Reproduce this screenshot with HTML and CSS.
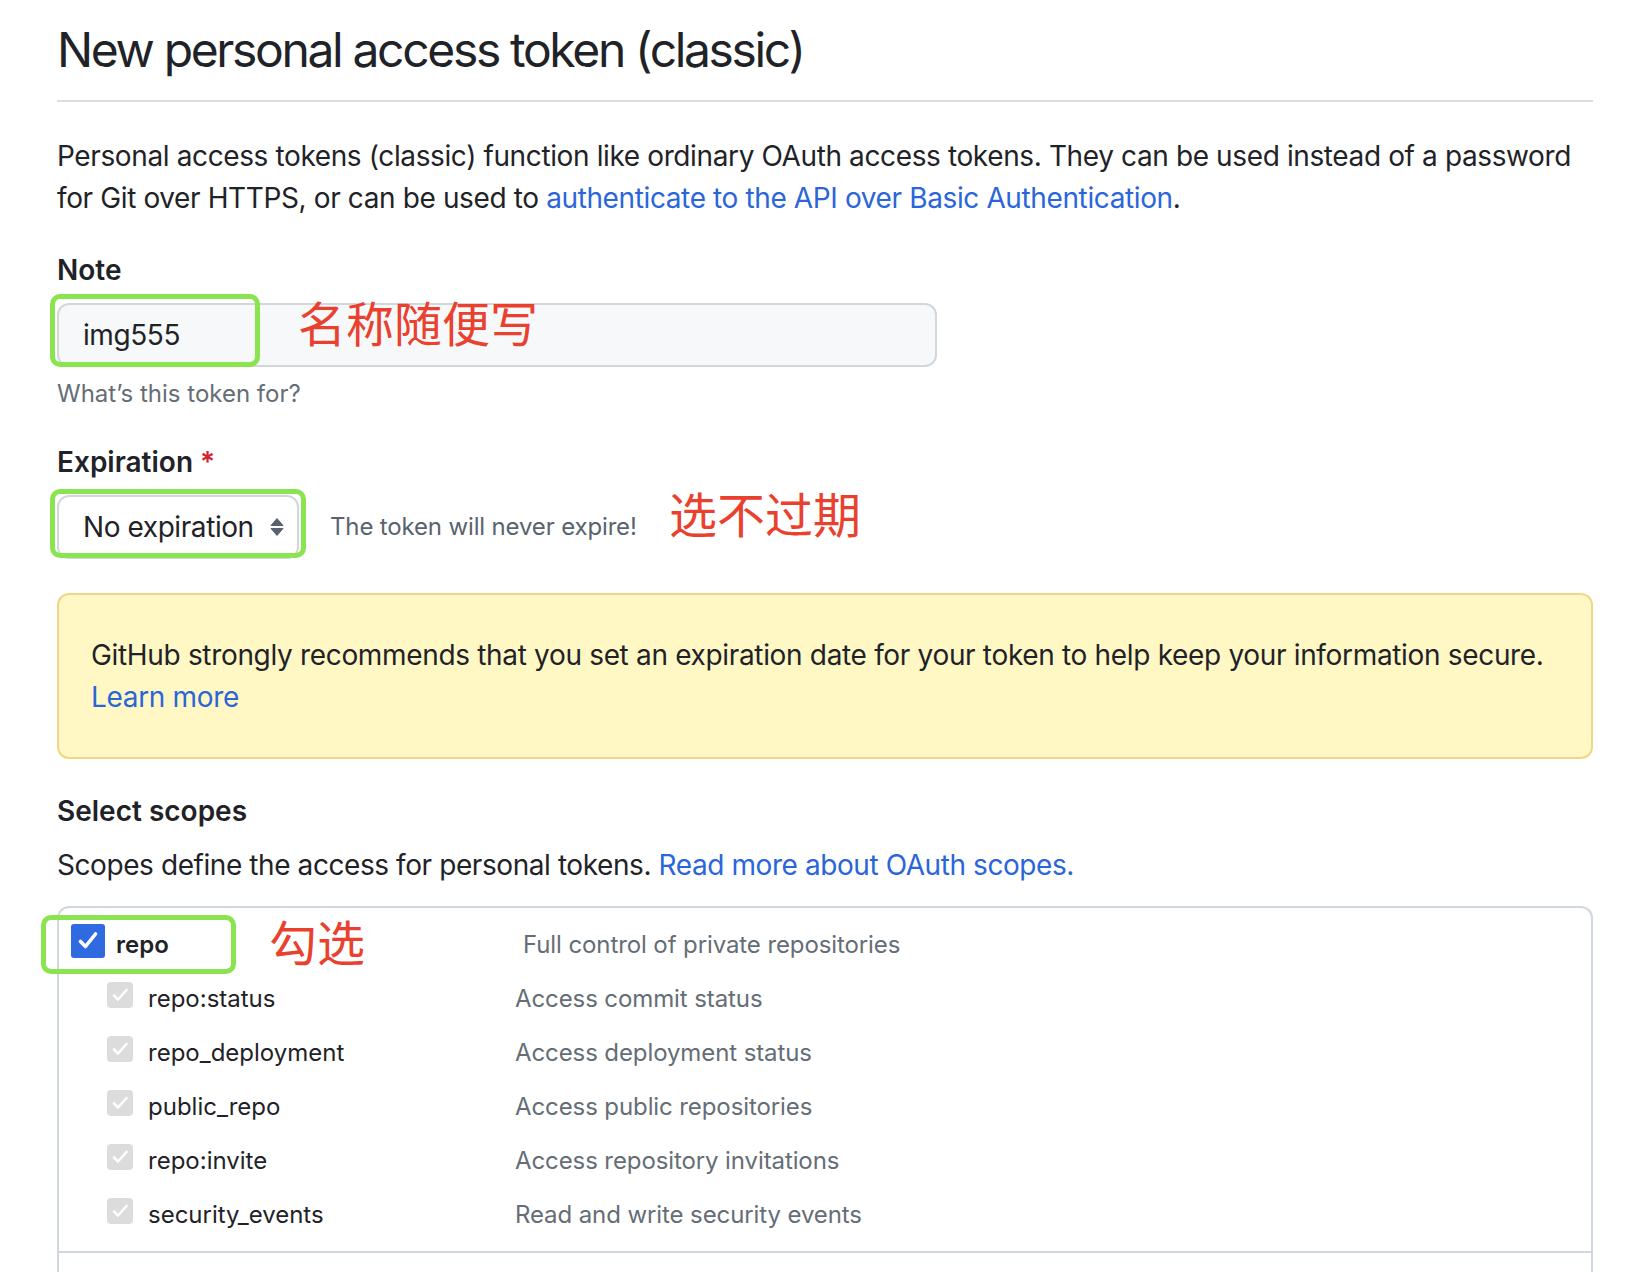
FILE: index.html
```html
<!DOCTYPE html>
<html lang="en">
<head>
<meta charset="utf-8">
<title>New personal access token (classic)</title>
<link rel="stylesheet" href="styles.css">
</head>
<body>
<main class="page">
  <h1 class="subhead">New personal access token (classic)</h1>

  <p class="intro">Personal access tokens (classic) function like ordinary OAuth access tokens. They can be used instead of a password for Git over HTTPS, or can be used to <a href="#">authenticate to the API over Basic Authentication</a>.</p>

  <div class="form-group">
    <label class="label">Note</label>
    <div class="input-wrap">
      <div class="input">img555</div>
      <span class="hl hl-note"></span>
      <span class="anno anno-note">名称随便写</span>
    </div>
    <p class="note">What’s this token for?</p>
  </div>

  <div class="form-group form-group-exp">
    <label class="label">Expiration <span class="req">*</span></label>
    <div class="expire-row">
      <div class="select-wrap">
        <div class="select">No expiration
          <svg class="select-arrows" width="16" height="20" viewBox="0 0 16 20"><path d="M8 1.5 L14 8.5 H2 Z M2 11.5 H14 L8 18.5 Z" fill="#59636e" stroke="#59636e" stroke-width="1" stroke-linejoin="round"/></svg>
        </div>
        <span class="hl hl-select"></span>
      </div>
      <span class="expire-note">The token will never expire!</span>
      <span class="anno anno-expire">选不过期</span>
    </div>
  </div>

  <div class="flash">GitHub strongly recommends that you set an expiration date for your token to help keep your information secure. <a href="#">Learn more</a></div>

  <h2 class="label scopes-title">Select scopes</h2>
  <p class="scopes-desc">Scopes define the access for personal tokens. <a href="#">Read more about OAuth scopes.</a></p>

  <div class="scopes">
    <div class="scope-list">
      <div class="scope-row scope-parent">
        <div class="scope-name">
          <span class="cb cb-on"><svg width="34" height="34" viewBox="0 0 34 34"><path d="M9.5 17.5 L14.5 22.5 L24.5 10" fill="none" stroke="#fff" stroke-width="3.6" stroke-linecap="round" stroke-linejoin="round"/></svg></span>
          <span class="scope-label strong">repo</span>
        </div>
        <div class="scope-desc">Full control of private repositories</div>
        <span class="hl hl-repo"></span>
        <span class="anno anno-repo">勾选</span>
      </div>
      <div class="scope-row">
        <div class="scope-name sub">
          <span class="cb cb-dis"><svg width="26" height="26" viewBox="0 0 26 26"><path d="M7 13.5 L11 17.5 L19.5 8" fill="none" stroke="#fff" stroke-width="2.6" stroke-linecap="round" stroke-linejoin="round"/></svg></span>
          <span class="scope-label">repo:status</span>
        </div>
        <div class="scope-desc">Access commit status</div>
      </div>
      <div class="scope-row">
        <div class="scope-name sub">
          <span class="cb cb-dis"><svg width="26" height="26" viewBox="0 0 26 26"><path d="M7 13.5 L11 17.5 L19.5 8" fill="none" stroke="#fff" stroke-width="2.6" stroke-linecap="round" stroke-linejoin="round"/></svg></span>
          <span class="scope-label">repo_deployment</span>
        </div>
        <div class="scope-desc">Access deployment status</div>
      </div>
      <div class="scope-row">
        <div class="scope-name sub">
          <span class="cb cb-dis"><svg width="26" height="26" viewBox="0 0 26 26"><path d="M7 13.5 L11 17.5 L19.5 8" fill="none" stroke="#fff" stroke-width="2.6" stroke-linecap="round" stroke-linejoin="round"/></svg></span>
          <span class="scope-label">public_repo</span>
        </div>
        <div class="scope-desc">Access public repositories</div>
      </div>
      <div class="scope-row">
        <div class="scope-name sub">
          <span class="cb cb-dis"><svg width="26" height="26" viewBox="0 0 26 26"><path d="M7 13.5 L11 17.5 L19.5 8" fill="none" stroke="#fff" stroke-width="2.6" stroke-linecap="round" stroke-linejoin="round"/></svg></span>
          <span class="scope-label">repo:invite</span>
        </div>
        <div class="scope-desc">Access repository invitations</div>
      </div>
      <div class="scope-row">
        <div class="scope-name sub">
          <span class="cb cb-dis"><svg width="26" height="26" viewBox="0 0 26 26"><path d="M7 13.5 L11 17.5 L19.5 8" fill="none" stroke="#fff" stroke-width="2.6" stroke-linecap="round" stroke-linejoin="round"/></svg></span>
          <span class="scope-label">security_events</span>
        </div>
        <div class="scope-desc">Read and write security events</div>
      </div>
    </div>
    <div class="scope-more"></div>
  </div>
</main>
</body>
</html>
```

FILE: styles.css
```css
* { box-sizing: border-box; }
html, body { margin: 0; background: #ffffff; }
body {
  font-family: Inter, "Noto Sans", sans-serif;
  color: #1f2328;
}
a { color: #2a66d9; text-decoration: none; }

.page {
  width: 1536px;
  margin-left: 57px;
}

.subhead {
  margin: 0;
  padding: 20px 0 20px;
  font-size: 48px;
  line-height: 60px;
  font-weight: 400;
  letter-spacing: -2.35px;
  border-bottom: 2px solid #d8dee4;
}

.intro {
  margin: 33px 0 0;
  font-size: 28px;
  line-height: 42px;
  letter-spacing: -0.38px;
}

.form-group { margin-top: 30px; }
.form-group-exp { margin-top: 29px; }

.label {
  display: block;
  margin: 0 0 12px;
  font-size: 28px;
  line-height: 42px;
  font-weight: 600;
}
.req { color: #d1242f; }

.input-wrap { position: relative; width: 880px; }
.input {
  height: 64px;
  padding: 0 24px;
  display: flex;
  align-items: center;
  font-size: 28px;
  letter-spacing: -0.42px;
  background: #f6f8fa;
  border: 2px solid #d0d7de;
  border-radius: 12px;
}

.note {
  margin: 9px 0 0;
  font-size: 24px;
  line-height: 36px;
  color: #656d76;
}

.hl {
  position: absolute;
  border: 5px solid #8ae44f;
  border-radius: 10px;
  pointer-events: none;
}
.hl-note { left: -7px; top: -9px; width: 210px; height: 73px; }
.hl-select { left: -7px; top: -6px; width: 256px; height: 69px; }
.hl-repo { left: -18px; top: -3px; width: 195px; height: 59px; }

.anno {
  position: absolute;
  font-family: "Noto Sans CJK SC", sans-serif;
  font-size: 48px;
  line-height: 48px;
  color: #e9412e;
  white-space: nowrap;
}
.anno-note { left: 241px; top: -6px; }
.anno-expire { left: 612px; top: -7px; }
.anno-repo { left: 210px; top: -2px; }

.expire-row {
  position: relative;
  display: flex;
  align-items: center;
  gap: 31px;
}
.select-wrap { position: relative; }
.select {
  width: 242px;
  height: 64px;
  padding: 0 12px 0 24px;
  display: flex;
  align-items: center;
  justify-content: space-between;
  font-size: 28px;
  letter-spacing: -0.42px;
  background: #ffffff;
  border: 2px solid #d0d7de;
  border-radius: 12px;
}
.select-arrows { flex: none; }
.expire-note {
  font-size: 24px;
  line-height: 36px;
  letter-spacing: -0.15px;
  color: #59636e;
}

.flash {
  margin-top: 34px;
  padding: 39px 32px;
  font-size: 28px;
  line-height: 42px;
  letter-spacing: -0.33px;
  background: #fff8c5;
  border: 2px solid #eed888;
  border-radius: 12px;
}

.scopes-title { margin: 31px 0 0; }
.scopes-desc {
  margin: 12px 0 0;
  font-size: 28px;
  line-height: 42px;
  letter-spacing: -0.42px;
}

.scopes {
  margin-top: 20px;
  border: 2px solid #d0d7de;
  border-bottom: none;
  border-radius: 12px 12px 0 0;
}
.scope-list {
  padding: 10px 0 9px;
  border-bottom: 2px solid #d0d7de;
}
.scope-more { height: 19px; }

.scope-row {
  position: relative;
  display: grid;
  grid-template-columns: 456px 1fr;
  align-items: center;
  height: 54px;
}
.scope-name {
  display: flex;
  align-items: center;
  gap: 11px;
  padding-left: 12px;
}
.scope-name.sub { gap: 15px; padding-left: 48px; }
.scope-label { font-size: 24px; line-height: 36px; }
.scope-label.strong { font-weight: 600; }
.scope-desc {
  font-size: 24px;
  line-height: 36px;
  letter-spacing: -0.1px;
  color: #656d76;
}
.scope-parent .scope-desc { padding-left: 8px; }

.cb { display: block; margin-bottom: 8px; flex: none; }
.cb svg { display: block; }
.cb-on { width: 34px; height: 34px; background: #2f6ae0; border-radius: 3px; }
.cb-dis { width: 26px; height: 26px; background: #dcdcdc; border-radius: 4px; }
```
